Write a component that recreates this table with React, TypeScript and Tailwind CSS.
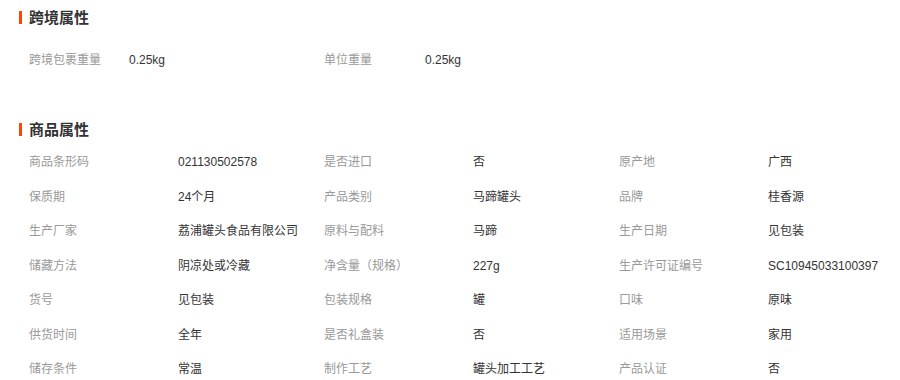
import React from "react";

const font = { fontFamily: '"Liberation Sans", "Noto Sans CJK SC", sans-serif' };

const rows: [string, string][][] = [
  [["商品条形码", "021130502578"], ["是否进口", "否"], ["原产地", "广西"]],
  [["保质期", "24个月"], ["产品类别", "马蹄罐头"], ["品牌", "桂香源"]],
  [["生产厂家", "荔浦罐头食品有限公司"], ["原料与配料", "马蹄"], ["生产日期", "见包装"]],
  [["储藏方法", "阴凉处或冷藏"], ["净含量（规格）", "227g"], ["生产许可证编号", "SC10945033100397"]],
  [["货号", "见包装"], ["包装规格", "罐"], ["口味", "原味"]],
  [["供货时间", "全年"], ["是否礼盒装", "否"], ["适用场景", "家用"]],
  [["储存条件", "常温"], ["制作工艺", "罐头加工工艺"], ["产品认证", "否"]],
];

function Heading({ text, h }: { text: string; h: string }) {
  return (
    <div className={`flex items-center pl-[19px] ${h}`}>
      <span className="w-[3px] h-[13px] bg-[#ff4400]" />
      <span className="ml-[7px] text-[15px] font-bold text-[#333333] leading-none">{text}</span>
    </div>
  );
}

export default function App() {
  return (
    <div className="w-[900px] h-[380px] bg-white overflow-hidden" style={font}>
      <Heading text="跨境属性" h="h-[34px]" />
      <div className="flex pl-[29px] mt-[8px] h-[35px] items-center text-[12px]">
        <div className="flex w-[295px] shrink-0">
          <span className="w-[100px] shrink-0 text-[#999999]">跨境包裹重量</span>
          <span className="text-[#333333]">0.25kg</span>
        </div>
        <div className="flex w-[295px] shrink-0">
          <span className="w-[101px] shrink-0 text-[#999999]">单位重量</span>
          <span className="text-[#333333]">0.25kg</span>
        </div>
      </div>
      <div className="mt-[36px]">
        <Heading text="商品属性" h="h-[32px]" />
      </div>
      <div className="pl-[29px] text-[12px]">
        {rows.map((r, i) => (
          <div key={i} className="flex h-[34.5px] items-center">
            {r.map(([k, v], j) => (
              <div key={j} className="flex w-[295px] shrink-0">
                <span className="w-[149px] shrink-0 text-[#999999]">{k}</span>
                <span className="text-[#333333] whitespace-nowrap">{v}</span>
              </div>
            ))}
          </div>
        ))}
      </div>
    </div>
  );
}
